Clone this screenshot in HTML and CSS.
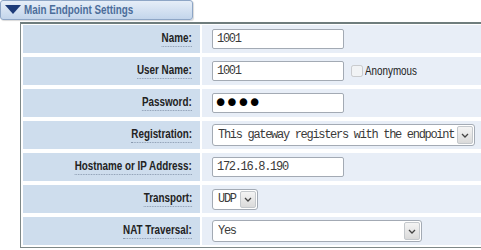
FILE: index.html
```html
<!DOCTYPE html>
<html lang="en">
<head>
    <meta charset="UTF-8">
    <title>Main Endpoint Settings</title>
    <link rel="stylesheet" href="styles.css">
</head>
<body>
    <div class="tab">
        <svg class="tri" width="16" height="10" viewBox="0 0 16 10"><polygon points="0,0 16,0 8,9" fill="#1d3b78"/></svg>
        <span class="narrow">Main Endpoint Settings</span>
    </div>

    <div class="frame">
        <table class="settings">
            <tr>
                <th><span class="lbl">Name:</span></th>
                <td><input type="text" class="txt" value="1001"></td>
            </tr>
            <tr>
                <th><span class="lbl">User Name:</span></th>
                <td>
                    <input type="text" class="txt" value="1001">
                    <label class="chk"><input type="checkbox" disabled><span class="narrow">Anonymous</span></label>
                </td>
            </tr>
            <tr>
                <th><span class="lbl">Password:</span></th>
                <td><input type="password" class="txt pwd" value="1234"></td>
            </tr>
            <tr>
                <th><span class="lbl">Registration:</span></th>
                <td>
                    <span class="sel sel-wide">
                        <select><option>This gateway registers with the endpoint</option></select>
                        <span class="arrow"><svg width="8" height="5" viewBox="0 0 8 5"><polyline points="1,1 4,4 7,1" fill="none" stroke="#444" stroke-width="1.3"/></svg></span>
                    </span>
                </td>
            </tr>
            <tr>
                <th><span class="lbl">Hostname or IP Address:</span></th>
                <td><input type="text" class="txt" value="172.16.8.190"></td>
            </tr>
            <tr>
                <th><span class="lbl">Transport:</span></th>
                <td>
                    <span class="sel sel-small">
                        <select><option>UDP</option></select>
                        <span class="arrow"><svg width="8" height="5" viewBox="0 0 8 5"><polyline points="1,1 4,4 7,1" fill="none" stroke="#444" stroke-width="1.3"/></svg></span>
                    </span>
                </td>
            </tr>
            <tr>
                <th><span class="lbl">NAT Traversal:</span></th>
                <td>
                    <span class="sel sel-mid">
                        <select><option>Yes</option></select>
                        <span class="arrow"><svg width="8" height="5" viewBox="0 0 8 5"><polyline points="1,1 4,4 7,1" fill="none" stroke="#444" stroke-width="1.3"/></svg></span>
                    </span>
                </td>
            </tr>
        </table>
    </div>
</body>
</html>
```

FILE: styles.css
```css
html, body {
    margin: 0;
    overflow: hidden;
    background: #fff;
}
body {
    font-family: "Liberation Sans", Arial, sans-serif;
    font-size: 12px;
    color: #222;
}
/* Arial Narrow look */
.narrow {
    display: inline-block;
    transform: scaleX(0.82);
    transform-origin: left center;
}
.tab {
    width: 191px;
    height: 18px;
    border: 1px solid #8ea6c6;
    border-radius: 3px;
    background: linear-gradient(#e6eef8, #c3d5eb);
    box-shadow: 1px 1px 1px rgba(0, 0, 0, 0.15);
    color: #4b6d9a;
    font-weight: bold;
    line-height: 18px;
    display: flex;
    align-items: center;
    gap: 3px;
}
.tri {
    margin-left: 4px;
}
.frame {
    margin: 2px 0 0 20px;
    width: 480px;
    border: 1px solid #7e8888;
    border-top: 2px solid #6f7d7d;
}
.settings {
    width: 100%;
    border-spacing: 2px 4px;
    margin: -3px 0 -2px;
}
.settings th {
    width: 169px;
    height: 28px;
    padding: 0 8px 0 0;
    background: #cedded;
    text-align: right;
}
.settings td {
    height: 28px;
    padding: 0 0 0 10px;
    background: #e8eef7;
}
.lbl {
    display: inline-block;
    transform: scaleX(0.82);
    transform-origin: right center;
    font-weight: bold;
    color: #222;
    border-bottom: 1px dotted #8898ae;
    line-height: 13px;
    padding-bottom: 1px;
}
.txt {
    box-sizing: border-box;
    width: 132px;
    height: 20px;
    border: 1px solid #a3aab4;
    border-radius: 2px;
    padding: 0 4px;
    font-family: "Liberation Mono", monospace;
    font-size: 12px;
    letter-spacing: -1.3px;
    color: #3a3a3a;
    vertical-align: middle;
    background: #fff;
}
.pwd {
    font-family: "DejaVu Sans", sans-serif;
    font-size: 26px;
    letter-spacing: -4px;
    padding-left: 0;
    line-height: 18px;
    color: #000;
}
.chk {
    display: inline-flex;
    align-items: center;
    margin-left: 4px;
    vertical-align: middle;
    color: #222;
}
.chk input {
    margin: 0 2px 0 0;
    width: 12px;
    height: 12px;
}
.sel {
    position: relative;
    display: inline-block;
    vertical-align: middle;
}
.sel select {
    appearance: none;
    -webkit-appearance: none;
    box-sizing: border-box;
    height: 22px;
    border: 1px solid #a3aab4;
    border-radius: 3px;
    padding: 0 18px 0 5px;
    background: #fff;
    font-family: "Liberation Mono", monospace;
    font-size: 12px;
    letter-spacing: -1.3px;
    color: #3a3a3a;
    display: block;
}
.sel-wide select { width: 263px; }
.sel-small select { width: 46px; height: 21px; }
.sel-mid select { width: 210px; }
.arrow {
    position: absolute;
    top: 2px;
    right: 2px;
    bottom: 2px;
    width: 14px;
    border: 1px solid #c4c8cc;
    border-radius: 2px;
    background: linear-gradient(#f4f4f4, #dadada);
    display: flex;
    align-items: center;
    justify-content: center;
    pointer-events: none;
}
```
